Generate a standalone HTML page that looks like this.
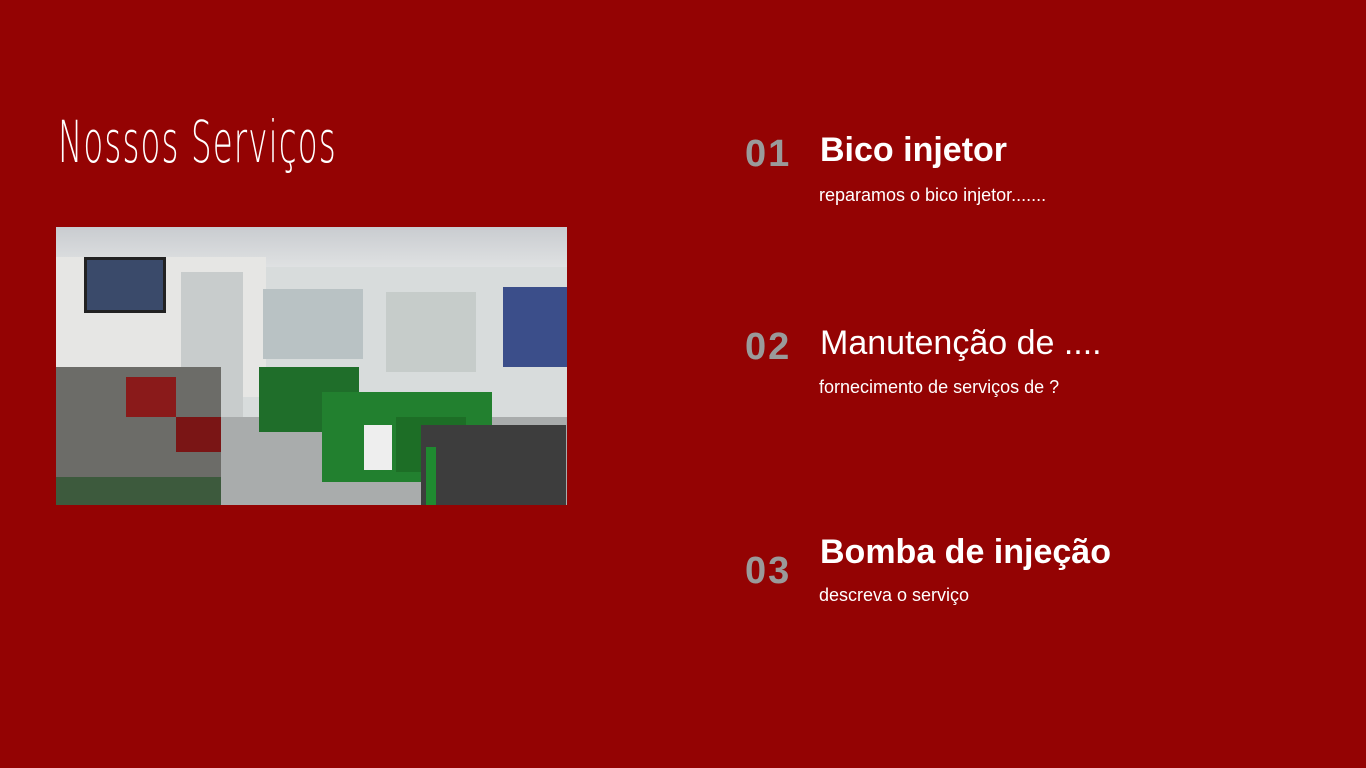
<!DOCTYPE html>
<html><head><meta charset="utf-8"><style>
*{margin:0;padding:0;box-sizing:border-box}
body{width:1366px;height:768px;background:#940303;position:relative;overflow:hidden;font-family:"Liberation Sans",sans-serif;color:#fff}
.t{position:absolute;left:58px;top:108px;font-size:58px;transform:scaleX(0.56);transform-origin:left top;white-space:nowrap;letter-spacing:2px;font-family:"DejaVu Sans","Liberation Sans",sans-serif;font-weight:200}
.n{position:absolute;left:745px;font-size:38px;font-weight:bold;color:#9a9a9a;letter-spacing:2px}
.h{position:absolute;left:820px;font-size:34px;white-space:nowrap}
.d{position:absolute;left:819px;font-size:18px;white-space:nowrap}
.p{position:absolute;left:56px;top:227px;width:511px;height:278px;overflow:hidden;background:#d8dcdc}
.p div{position:absolute}
</style></head><body>
<div class="t">Nossos Serviços</div>
<div class="p">
<div style="left:0;top:0;width:511px;height:40px;background:linear-gradient(#c9ccd0,#dfe1e2)"></div>
<div style="left:0;top:30px;width:210px;height:140px;background:#e6e6e4"></div>
<div style="left:28px;top:30px;width:82px;height:56px;background:#3a4a6a;border:3px solid #222"></div>
<div style="left:125px;top:45px;width:62px;height:170px;background:#c8cccc"></div>
<div style="left:207px;top:62px;width:100px;height:70px;background:#b9c2c4"></div>
<div style="left:330px;top:65px;width:90px;height:80px;background:#c6ccca"></div>
<div style="left:447px;top:60px;width:64px;height:80px;background:#3b4e8a"></div>
<div style="left:0;top:190px;width:511px;height:88px;background:#a9acac"></div>
<div style="left:0;top:140px;width:165px;height:138px;background:#6c6c68"></div>
<div style="left:0;top:250px;width:165px;height:28px;background:#3d5a3d"></div>
<div style="left:203px;top:140px;width:100px;height:65px;background:#1f6e2a"></div>
<div style="left:266px;top:165px;width:170px;height:90px;background:#22802f"></div>
<div style="left:340px;top:190px;width:70px;height:55px;background:#1d6e26"></div>
<div style="left:365px;top:198px;width:145px;height:80px;background:#3d3d3d"></div>
<div style="left:370px;top:220px;width:10px;height:58px;background:#1f8a30"></div>
<div style="left:308px;top:198px;width:28px;height:45px;background:#eeeeee"></div>
<div style="left:70px;top:150px;width:50px;height:40px;background:#8a1a1a"></div>
<div style="left:120px;top:190px;width:45px;height:35px;background:#7a1515"></div>
</div>
<div class="n" style="top:133px">01</div>
<div class="h" style="top:131px;font-weight:bold">Bico injetor</div>
<div class="d" style="top:185px">reparamos o bico injetor.......</div>
<div class="n" style="top:326px">02</div>
<div class="h" style="top:324px">Manutenção de ....</div>
<div class="d" style="top:377px">fornecimento de serviços de ?</div>
<div class="n" style="top:550px">03</div>
<div class="h" style="top:533px;font-weight:bold">Bomba de injeção</div>
<div class="d" style="top:585px">descreva o serviço</div>
</body></html>
